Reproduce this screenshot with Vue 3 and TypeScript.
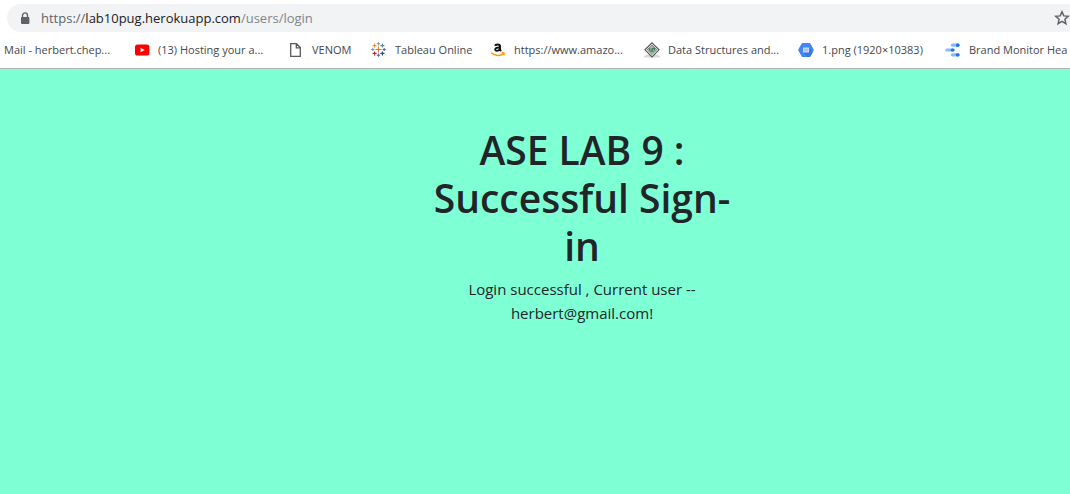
<script setup lang="ts">
type IconName = 'none' | 'youtube' | 'file' | 'tableau' | 'amazon' | 'diamond' | 'hexagon' | 'studio'

interface Bookmark {
  label: string
  icon: IconName
}

interface Plus {
  x: number
  y: number
  r: number
  color: string
}

const bookmarks: Bookmark[] = [
  { label: 'Mail - herbert.chep...', icon: 'none' },
  { label: '(13) Hosting your a...', icon: 'youtube' },
  { label: 'VENOM', icon: 'file' },
  { label: 'Tableau Online', icon: 'tableau' },
  { label: 'https://www.amazo...', icon: 'amazon' },
  { label: 'Data Structures and...', icon: 'diamond' },
  { label: '1.png (1920×10383)', icon: 'hexagon' },
  { label: 'Brand Monitor Hea', icon: 'studio' },
]

const pluses: Plus[] = [
  { x: 7.5, y: 7.5, r: 3, color: '#e8762d' },
  { x: 7.5, y: 1.8, r: 1.6, color: '#7199a6' },
  { x: 7.5, y: 13.2, r: 1.6, color: '#5b6591' },
  { x: 1.8, y: 7.5, r: 1.6, color: '#7199a6' },
  { x: 13.2, y: 7.5, r: 1.6, color: '#5b6591' },
  { x: 3.6, y: 3.6, r: 2, color: '#eb912c' },
  { x: 11.4, y: 3.6, r: 2, color: '#59879b' },
  { x: 3.6, y: 11.4, r: 2, color: '#c72035' },
  { x: 11.4, y: 11.4, r: 2, color: '#1f447e' },
]

const plusPath = (p: Plus): string =>
  `M${p.x - p.r} ${p.y}H${p.x + p.r}M${p.x} ${p.y - p.r}V${p.y + p.r}`
</script>

<template>
  <div class="window">
    <header>
      <div class="toolbar">
        <div class="omnibox">
          <svg class="lock" width="10" height="13" viewBox="0 0 10 13" aria-hidden="true">
            <path d="M2.5 5.5V3.4a2.5 2.5 0 0 1 5 0v2.1" fill="none" stroke="#5f6368" stroke-width="1.4" />
            <rect x="1" y="5" width="8.4" height="7" rx="1" fill="#5f6368" />
          </svg>
          <div class="url" role="textbox" aria-label="Address" contenteditable="true" spellcheck="false"><span>https://</span><b>lab10pug.herokuapp.com</b><i>/users/login</i></div>
          <button class="star" type="button" aria-label="Bookmark this page">
            <svg width="16" height="16" viewBox="0 0 16 16" aria-hidden="true">
              <path d="M8 1.8l1.8 4.1 4.5.4-3.4 3 1 4.4L8 11.4l-3.9 2.3 1-4.4-3.4-3 4.5-.4z" fill="none" stroke="#5f6368" stroke-width="1.5" />
            </svg>
          </button>
        </div>
      </div>
      <nav class="bookmarks" aria-label="Bookmarks">
        <a v-for="b in bookmarks" :key="b.label" class="bookmark" href="#">
          <svg v-if="b.icon !== 'none'" width="16" height="16" viewBox="0 0 16 16" aria-hidden="true">
            <template v-if="b.icon === 'youtube'">
              <rect x="1" y="2.5" width="14.4" height="11" rx="2.6" fill="#f00" />
              <path d="M6.6 5.7v4.6l4-2.3z" fill="#fff" />
            </template>
            <path v-else-if="b.icon === 'file'" d="M2.7 1.7h5.8l3.8 3.8v8.8H2.7zM8.3 1.7v4.1h4" fill="none" stroke="#5a5a5a" stroke-width="1.3" />
            <template v-else-if="b.icon === 'tableau'">
              <path v-for="p in pluses" :key="`${p.x}-${p.y}`" :d="plusPath(p)" :stroke="p.color" stroke-width="1.1" fill="none" />
            </template>
            <template v-else-if="b.icon === 'amazon'">
              <path d="M5.2 3.8c.3-1.8 4.8-2 4.8.3V8l1 1.1" fill="none" stroke="#111" stroke-width="2" />
              <path d="M9.4 5.5c-3 0-4.2.8-4.2 2.1 0 1.8 3.2 1.8 4.2-.3" fill="none" stroke="#111" stroke-width="1.8" />
              <path d="M1.3 10.8c3.5 3.2 8.8 3.4 12 1M11.6 10.7c2.1-.4 3.2-.2 2.1 2.4" fill="none" stroke="#f90" stroke-width="1.5" />
            </template>
            <template v-else-if="b.icon === 'diamond'">
              <path d="M0 14l3-1.5h10l3 1.5v1.5H0z" fill="#d8d8d8" />
              <path d="M8 .8l7 7-7 7-7-7z" fill="#fff" stroke="#555" stroke-width="1.2" />
              <path d="M8 3l4.8 4.8L8 12.6 3.2 7.8z" fill="#9ebfab" stroke="#666" stroke-width=".7" />
              <path d="M5 6l2 1 2-1.5 2 .5v2l-1.5 1.7h-3L5 8z" fill="#41795a" />
              <path d="M6.3 8h1.2M8.8 8H10" stroke="#dcebe1" stroke-width="1" />
            </template>
            <template v-else-if="b.icon === 'hexagon'">
              <path d="M4.7 1h6.6q.7 0 1 .6l3.3 5.7q.3.7 0 1.4l-3.3 5.7q-.3.6-1 .6H4.7q-.7 0-1-.6L.4 8.7q-.3-.7 0-1.4l3.3-5.7q.3-.6 1-.6z" fill="#4285f4" />
              <path d="M11 6l3.6 4.5-2.3 3.9q-.3.6-1 .6H9.5L5 10.3z" fill="#3b78dc" />
              <rect x="5" y="5.5" width="6" height="5" fill="#c6dafc" />
              <rect x="6" y="6.8" width="4" height="2.4" fill="#a1c2fa" />
            </template>
            <template v-else-if="b.icon === 'studio'">
              <g stroke-width="3.2" stroke-linecap="round">
                <path d="M7.4 3.2H13M1.9 8H8M7.4 12.8H13" stroke="#8ab8fb" />
                <path d="M12.4 3.2h.6M7.4 8H8M12.4 12.8h.6" stroke="#1a73e8" />
              </g>
            </template>
          </svg>
          <span>{{ b.label }}</span>
        </a>
      </nav>
    </header>
    <main>
      <section class="message">
        <h1>ASE LAB 9 : Successful Sign-in</h1>
        <p>Login successful , Current user -- herbert@gmail.com!</p>
      </section>
    </main>
  </div>
</template>

<style>
body {
  margin: 0;
  background: #7fffd4;
}
</style>

<style scoped>
.window {
  min-height: 100vh;
  overflow: hidden;
  background: #7fffd4;
  font-family: "Open Sans", "Noto Sans", sans-serif;
}

header {
  background: #fff;
  border-bottom: 1px solid #b4b4b4;
}

.toolbar {
  padding: 4px 0 0 7px;
}

.omnibox {
  display: flex;
  align-items: center;
  height: 28px;
  padding-left: 13px;
  background: #f1f3f4;
  border-radius: 14px 0 0 14px;
}

.lock {
  flex: none;
  margin-right: 11px;
}

.url {
  flex: 1;
  color: #80868b;
  font-size: 13px;
  line-height: 20px;
  white-space: nowrap;
  outline: none;
}

.url span {
  color: #5f6368;
}

.url b {
  color: #202124;
  font-weight: 400;
}

.url i {
  font-style: normal;
}

.star {
  display: flex;
  flex: none;
  padding: 0;
  border: 0;
  background: none;
}

.bookmarks {
  display: grid;
  grid-template-columns: 130px 154px 83px 119px 154px 154px 147px 1fr;
  align-items: center;
  height: 36px;
  padding-left: 4px;
}

.bookmark {
  display: flex;
  align-items: center;
  gap: 8px;
  min-width: 0;
  color: #45484c;
  font-size: 11px;
  line-height: 16px;
  text-decoration: none;
  white-space: nowrap;
}

.bookmark svg {
  flex: none;
}

main {
  padding: 57px 0 0 94px;
}

.message {
  max-width: 304px;
  margin: 0 auto;
  color: #212529;
  text-align: center;
}

h1 {
  margin: 0 0 7px;
  font-size: 39px;
  font-weight: 600;
  line-height: 48px;
}

p {
  margin: 0;
  font-size: 15px;
  line-height: 24px;
}
</style>
